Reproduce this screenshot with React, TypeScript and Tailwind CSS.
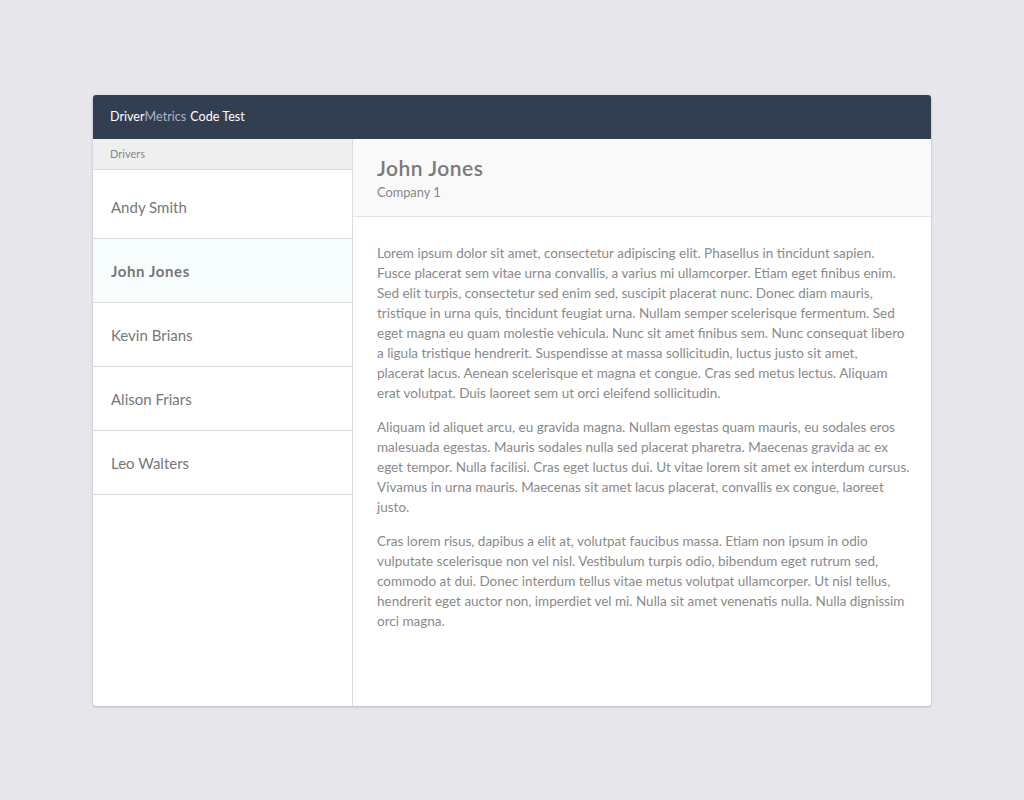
import React from "react";

const drivers = ["Andy Smith", "John Jones", "Kevin Brians", "Alison Friars", "Leo Walters"];

export default function App() {
  return (
    <div className="min-h-[800px] w-full bg-[#e8e7ec] pt-[95px]" style={{ fontFamily: "Lato, 'Noto Sans', sans-serif" }}>
      <div className="mx-auto flex h-[611px] w-[838px] flex-col overflow-hidden rounded-[3px] bg-white shadow-[0_1px_3px_rgba(0,0,0,0.22)]">
        <div className="flex h-[44px] shrink-0 items-center bg-[#343e51] px-[17px] text-[12.6px] text-white">
          <span>Driver</span>
          <span className="text-[#aab4c6]">Metrics</span>
          <span className="ml-[4px]">Code Test</span>
        </div>
        <div className="flex min-h-0 flex-1">
          <div className="flex w-[260px] shrink-0 flex-col border-r border-[#dcdcdc]">
            <div className="flex h-[31px] shrink-0 items-center border-b border-[#dddddd] bg-[#efefef] px-[17px] pt-[1px] text-[11px] text-[#888888]">
              Drivers
            </div>
            <div className="pt-[5px]">
              {drivers.map((d) => {
                const sel = d === "John Jones";
                return (
                  <div
                    key={d}
                    className={
                      "flex h-[64px] items-center border-b border-[#dddddd] px-[18px] pt-[1px] text-[15px] text-[#777777] " +
                      (sel ? "bg-[#f7fdfd] font-bold tracking-[0.6px]" : "bg-white")
                    }
                  >
                    {d}
                  </div>
                );
              })}
            </div>
          </div>
          <div className="flex min-w-0 flex-1 flex-col">
            <div className="flex h-[78px] shrink-0 flex-col justify-center border-b border-[#e3e3e3] bg-[#f9f9f9] px-[24px]">
              <div className="text-[21px] font-semibold leading-[26px] tracking-[0.5px] text-[#7a7a7a]">John Jones</div>
              <div className="mt-[3px] text-[12.8px] leading-[16px] text-[#888888]">Company 1</div>
            </div>
            <div className="pl-[24px] pr-[19px] pt-[26px] text-[13.5px] leading-[20px] text-[#8a8a8a]">
              <p className="mb-[14px] pr-[3px]">
                Lorem ipsum dolor sit amet, consectetur adipiscing elit. Phasellus in tincidunt sapien. Fusce placerat sem vitae urna convallis, a varius mi ullamcorper. Etiam eget finibus enim. Sed elit turpis, consectetur sed enim sed, suscipit placerat nunc. Donec diam mauris, tristique in urna quis, tincidunt feugiat urna. Nullam semper scelerisque fermentum. Sed eget magna eu quam molestie vehicula. Nunc sit amet finibus sem. Nunc consequat libero a ligula tristique hendrerit. Suspendisse at massa sollicitudin, luctus justo sit amet,<br />placerat lacus. Aenean scelerisque et magna et congue. Cras sed metus lectus. Aliquam erat volutpat. Duis laoreet sem ut orci eleifend sollicitudin.
              </p>
              <p className="mb-[14px]">
                Aliquam id aliquet arcu, eu gravida magna. Nullam egestas quam mauris, eu sodales eros malesuada egestas. Mauris sodales nulla sed placerat pharetra. Maecenas gravida ac ex eget tempor. Nulla facilisi. Cras eget luctus dui. Ut vitae lorem sit amet ex interdum cursus. Vivamus in urna mauris. Maecenas sit amet lacus placerat, convallis ex congue, laoreet justo.
              </p>
              <p>
                Cras lorem risus, dapibus a elit at, volutpat faucibus massa. Etiam non ipsum in odio vulputate scelerisque non vel nisl. Vestibulum turpis odio, bibendum eget rutrum sed, commodo at dui. Donec interdum tellus vitae metus volutpat ullamcorper. Ut nisl tellus, hendrerit eget auctor non, imperdiet vel mi. Nulla sit amet venenatis nulla. Nulla dignissim orci magna.
              </p>
            </div>
          </div>
        </div>
      </div>
    </div>
  );
}
